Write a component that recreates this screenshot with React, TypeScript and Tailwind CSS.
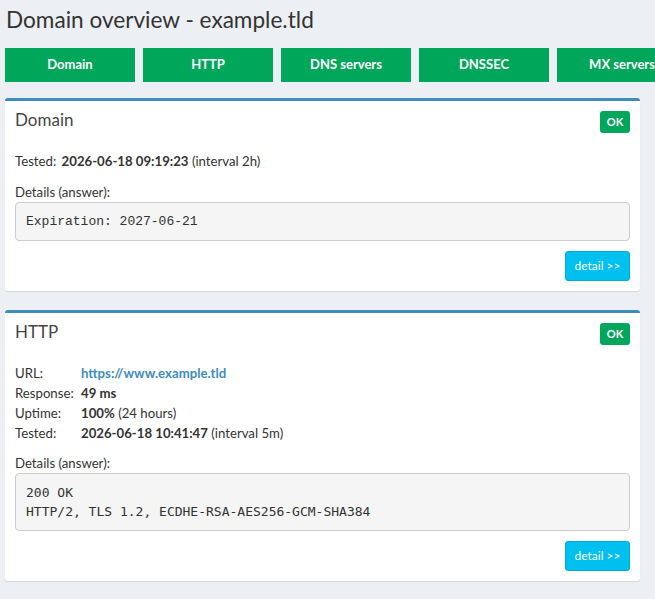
import React from "react";

const font = { fontFamily: "'Source Sans Pro', Lato, 'Liberation Sans', sans-serif" };

const tabs = ["Domain", "HTTP", "DNS servers", "DNSSEC", "MX servers"];

const OkBadge = () => (
  <span className="inline-flex h-[22px] w-[30px] items-center justify-center rounded-[3px] bg-[#00a65a] text-[11px] font-bold text-white">
    OK
  </span>
);

const DetailButton = () => (
  <button className="h-[30px] w-[65px] rounded-[3px] border border-[#00acd6] bg-[#00c0ef] text-[12px] text-white">
    detail &gt;&gt;
  </button>
);

const Panel = ({ title, children }: { title: string; children: React.ReactNode }) => (
  <div className="mr-[15px] rounded-[3px] border-t-[3px] border-[#3c8dbc] bg-white shadow-[0_1px_1px_rgba(0,0,0,0.1)]">
    <div className="flex items-start justify-between px-[10px] pt-[10px]">
      <h3 className="-mt-[2px] text-[17px] leading-[22px] text-[#444]">{title}</h3>
      <OkBadge />
    </div>
    <div className="px-[10px] pb-[10px]">{children}</div>
  </div>
);

export default function App() {
  return (
    <div className="min-h-[599px] overflow-hidden bg-[#ecf0f5] pl-[5px] pt-[6px] text-[13.2px] text-[#333]" style={font}>
      <h1 className="pl-[1px] text-[22.6px] leading-[28px] text-[#333]">Domain overview - example.tld</h1>

      <div className="mt-[14px] flex gap-[8px] whitespace-nowrap">
        {tabs.map((t) => (
          <div
            key={t}
            className="flex h-[34px] w-[130px] shrink-0 items-center justify-center bg-[#00a65a] text-[13px] font-bold text-white"
          >
            {t}
          </div>
        ))}
      </div>

      <div className="mt-[16px]">
        <Panel title="Domain">
          <div className="mt-[18px] leading-[20px]">
            Tested: <b className="ml-[2px]">2026-06-18 09:19:23</b> (interval 2h)
          </div>
          <div className="mt-[11px] leading-[20px]">Details (answer):</div>
          <pre
            className="mb-[10px] rounded-[4px] border border-[#ccc] bg-[#f5f5f5] px-[10px] py-[9px] text-[13px] leading-[19px] text-[#333]"
            style={{ fontFamily: "'Liberation Mono', monospace" }}
          >
            Expiration: 2027-06-21
          </pre>
          <div className="flex justify-end">
            <DetailButton />
          </div>
        </Panel>
      </div>

      <div className="mt-[19px]">
        <Panel title="HTTP">
          <div className="mt-[18px] grid grid-cols-[66px_1fr] leading-[20px]">
            <span>URL:</span>
            <a className="font-bold text-[#3c8dbc]">https://www.example.tld</a>
            <span>Response:</span>
            <b>49 ms</b>
            <span>Uptime:</span>
            <span>
              <b>100%</b> (24 hours)
            </span>
            <span>Tested:</span>
            <span>
              <b>2026-06-18 10:41:47</b> (interval 5m)
            </span>
          </div>
          <div className="mt-[10px] leading-[20px]">Details (answer):</div>
          <pre
            className="mb-[10px] rounded-[4px] border border-[#ccc] bg-[#f5f5f5] px-[10px] py-[9px] text-[13px] leading-[19px] text-[#333]"
            style={{ fontFamily: "'DejaVu Sans Mono', monospace" }}
          >
            {"200 OK\nHTTP/2, TLS 1.2, ECDHE-RSA-AES256-GCM-SHA384"}
          </pre>
          <div className="flex justify-end">
            <DetailButton />
          </div>
        </Panel>
      </div>
    </div>
  );
}
